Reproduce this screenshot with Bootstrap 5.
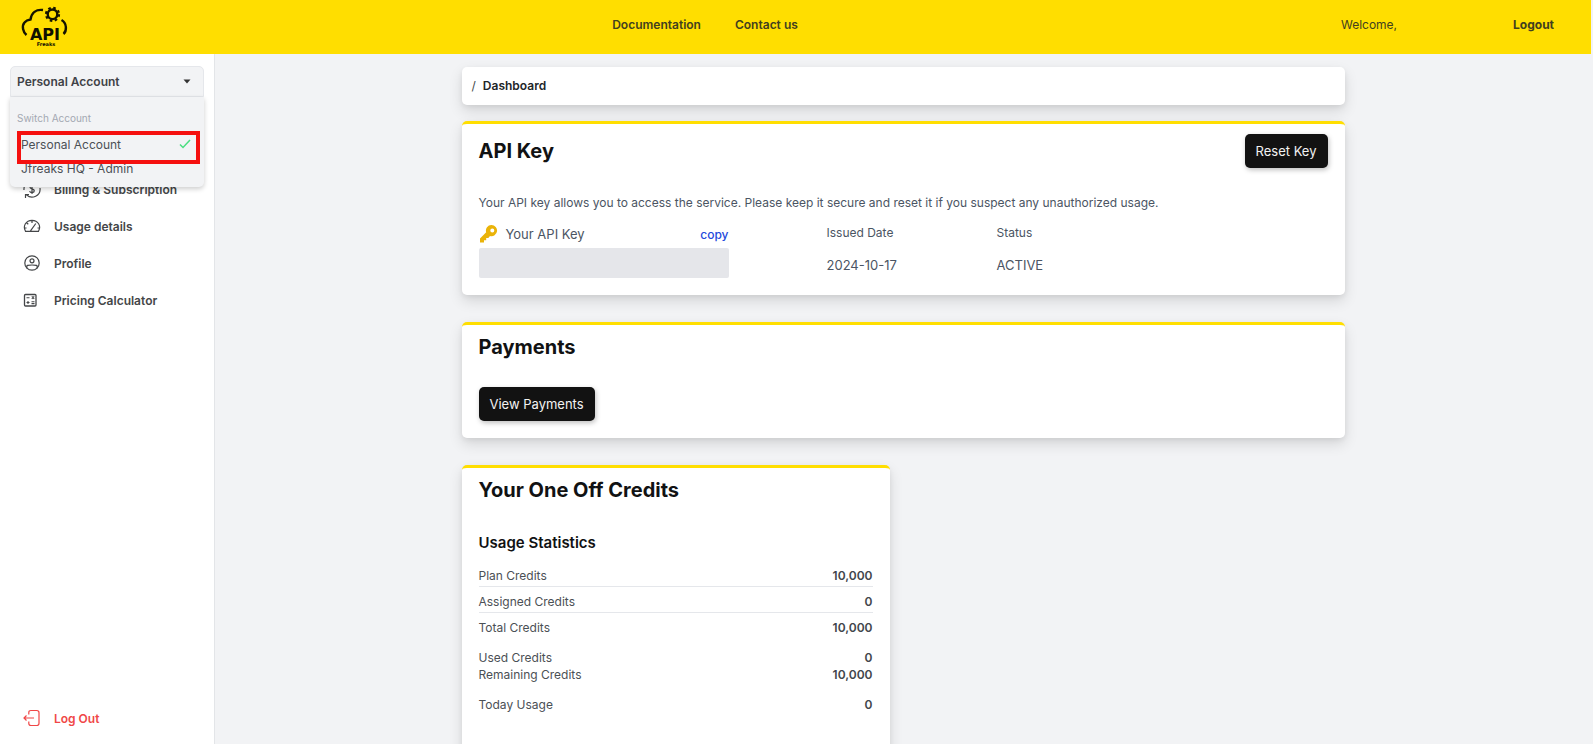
<!DOCTYPE html>
<html lang="en">
<head>
<meta charset="utf-8">
<meta name="viewport" content="width=device-width, initial-scale=1">
<title>API Freaks - Dashboard</title>
<link href="https://cdn.jsdelivr.net/npm/bootstrap@5.3.0/dist/css/bootstrap.min.css" rel="stylesheet">
<style>
  :root { --brand: #ffde00; --ink: #111213; --muted: #4b5563; --page: #f2f3f5; }
  body { font-family: Inter, sans-serif; font-size: 12px; line-height: 17px; color: #444648; background: var(--page); padding-right: 2px; }
  a { color: inherit; text-decoration: none; }
  .topbar { background: var(--brand); height: 54px; padding: 0 37px 5px 20px; color: #42401f; }
  .topbar .logo { width: 50px; height: 46px; margin-top: 5px; }
  .topbar .side { flex: 1 1 0; }
  .topbar .links { flex: 0 0 auto; gap: 34px; margin-right: 164px; }
  .topbar .user { gap: 116px; }
  .sidebar { width: 215px; flex: none; background: #fff; border-right: 1px solid #e3e5e8; padding: 12px 10px 9px; }
  .switcher button.toggle { width: 100%; height: 31px; padding: 0 12px 0 6px; background: var(--page); border: 1px solid #e5e7eb; border-radius: 5px 5px 0 0; font-weight: 600; color: #3f4247; }
  .switcher .dropdown-menu { top: 31px; left: 0; width: 100%; min-width: 0; margin: 0; padding: 13px 7px 7px; border: 0; border-radius: 0 0 5px 5px; background: var(--page); box-shadow: 0 2px 5px rgba(0,0,0,.2); font-size: 12px; color: #4b5055; }
  .switcher .caption { font-size: 10px; color: #a3a8b2; margin-bottom: 5px; }
  .switcher .option { border: 0; background: none; width: 100%; padding: 0 6px 0 4px; color: inherit; height: 24px; }
  .switcher .marker { position: absolute; left: 7px; right: 4px; top: 34px; height: 33px; border: 4px solid #f5100f; pointer-events: none; }
  .menu { margin-top: 75px; gap: 3px; }
  .menu a, .logout { height: 34px; padding-left: 13px; gap: 13px; font-weight: 600; color: #444648; }
  .menu svg, .logout svg { width: 18px; height: 18px; flex: none; }
  .logout { color: #f04747; }
  .content-wrap { max-width: 883px; padding-top: 13px; }
  .panel { background: #fff; border-radius: 5px; box-shadow: 0 6px 14px rgba(0,0,0,.12), 0 2px 5px rgba(0,0,0,.06); }
  .panel.accent { border-top: 3px solid var(--brand); padding: 8px 17px 17px; }
  .panel.key-info { padding-top: 10px; color: var(--muted); }
  .crumbs { height: 38px; padding: 0 10px 2px; gap: 7px; }
  h1, h2 { font-size: 20px; line-height: 28px; font-weight: 700; color: var(--ink); margin: 0; }
  h3 { font-size: 15px; line-height: 24px; font-weight: 600; color: var(--ink); margin: 0; }
  .btn-ink { --bs-btn-bg: #121212; --bs-btn-color: #f2f2f2; --bs-btn-hover-bg: #333; --bs-btn-hover-color: #fff; height: 34px; padding: 0 11px; border: 0; border-radius: 5px; font-size: 13px; line-height: 20px; box-shadow: 1px 2px 5px rgba(0,0,0,.25); }
  .key-head { margin-bottom: 23px; }
  .key-text { margin-bottom: 9px; padding-top: 3px; }
  .key-col { width: 250px; margin-right: 98px; }
  .key-date { width: 170px; }
  .key-field { height: 30px; width: 100%; border: 0; border-radius: 2px; background: #e5e6ea; }
  .big { font-size: 13px; line-height: 20px; }
  .key-value { margin-top: 14px; }
  .copy { color: #2449dc; font-weight: 500; border: 0; background: none; padding: 0; }
  .pay { margin: 27px 0; }
  .pay h2 { margin-bottom: 26px; }
  .credits { display: grid; grid-template-columns: 1fr 1fr; gap: 27px; }
  .credits h2 { margin-bottom: 27px; }
  .credits h3 { margin-bottom: 6px; }
  .stats { width: 100%; color: #4b5055; }
  .stats th { font-weight: 400; }
  .stats td { font-weight: 600; text-align: right; color: #42464b; }
  .stats th, .stats td { padding: 0; }
  .stats .ruled > * { padding: 6px 0 2px; border-bottom: 1px solid #e5e7eb; }
  .stats .spaced > * { padding-top: 6px; }
  .stats .section > * { padding-top: 13px; }
</style>
</head>
<body class="vh-100 overflow-hidden d-flex flex-column">
<header class="topbar d-flex align-items-center flex-shrink-0">
  <div class="side">
    <a href="#" aria-label="API Freaks">
      <svg class="logo" viewBox="20 4 50 46" fill="none" stroke="#161400" stroke-width="2.400">
        <path d="M26.500 35C23 32 21.500 26 24.500 22.500C26.500 20 29 19.700 30.500 19.500C31.500 13 36 9 43 10M61.500 20C67 23 67 31 63.500 34"/>
        <circle cx="52.500" cy="14.300" r="4.800" stroke-width="2.400"/>
        <circle cx="52.500" cy="14.300" r="6.500" stroke-width="2.200" stroke-dasharray="2.550 2.550"/>
        <g fill="#111000" stroke="none" font-family="DejaVu Sans, sans-serif" font-weight="700" text-anchor="middle">
          <text x="45" y="40" font-size="16">API</text>
          <text x="46" y="45.500" font-size="5">Freaks</text>
        </g>
      </svg>
    </a>
  </div>
  <nav class="links d-flex fw-semibold"><a href="#">Documentation</a><a href="#">Contact us</a></nav>
  <div class="side user d-flex justify-content-end"><span>Welcome,</span><a href="#" class="fw-bold">Logout</a></div>
</header>

<div class="d-flex flex-grow-1 overflow-hidden">
  <aside class="sidebar d-flex flex-column">
    <div class="switcher dropdown">
      <button class="toggle d-flex align-items-center justify-content-between" type="button" aria-expanded="true">Personal Account
        <svg width="8" height="5" viewBox="0 0 8 5"><path d="M.5 .5h7L4 4.500z" fill="#333"/></svg>
      </button>
      <div class="dropdown-menu show">
        <div class="caption">Switch Account</div>
        <button type="button" class="option d-flex align-items-center justify-content-between">Personal Account
          <svg width="12" height="10" viewBox="0 0 12 10" fill="none" stroke="#4ade80" stroke-width="1.500"><path d="M1 5.500 4 8.500 11 1"/></svg>
        </button>
        <button type="button" class="option d-flex align-items-center">Jfreaks HQ - Admin</button>
        <div class="marker"></div>
      </div>
    </div>
    <nav class="menu d-flex flex-column">
      <a href="#" class="d-flex align-items-center">
        <svg viewBox="0 0 18 18" fill="none" stroke="currentColor" stroke-width="1.200"><path d="M1 10A8 8 0 0 1 14 3M17 8A8 8 0 0 1 3.500 14.800M2.500 18V14.500H6M14.500 0V3.500H11M11.500 6.500C10.500 5 7 5.200 7 7.200S11.300 8.500 11.300 10.800S7.500 13 6.500 11.300M9 4V14"/></svg>
        Billing &amp; Subscription</a>
      <a href="#" class="d-flex align-items-center">
        <svg viewBox="0 0 18 18" fill="none" stroke="currentColor" stroke-width="1.200"><path d="M2.500 14.300C-.5 9 3 3.300 9 3.300S18.500 9 15.500 14.300ZM9 3.500V6M3.800 6 5.300 7.300M1.300 11H3.500M14.500 11H16.700M7.500 13.800 12.800 6.500"/></svg>
        Usage details</a>
      <a href="#" class="d-flex align-items-center">
        <svg viewBox="0 0 18 18" fill="none" stroke="currentColor" stroke-width="1.200"><circle cx="9" cy="9" r="7.200"/><circle cx="9" cy="6.800" r="2"/><path d="M4 14.300C2.800 11 5 11 9 11S15.200 11 14 14.300"/></svg>
        Profile</a>
      <a href="#" class="d-flex align-items-center">
        <svg viewBox="0 0 18 18" fill="none" stroke="currentColor" stroke-width="1.300"><rect x="1.500" y="3.500" width="11.500" height="11.500" rx="1"/><path d="M3.500 6.700H6.500M8.800 5.400 11.200 7.800M11.200 5.400 8.800 7.800M3.500 11.500H6.500M5 10V13M8.500 10.700H11.500M8.500 12.600H11.500" stroke-width="1.100"/></svg>
        Pricing Calculator</a>
    </nav>
    <a href="#" class="logout d-flex align-items-center mt-auto">
      <svg viewBox="0 0 18 18" fill="none" stroke="currentColor" stroke-width="1.200"><path d="M5.800 5.500V3.500Q5.800 1.500 8 1.500H13.800Q16 1.500 16 3.700V14.300Q16 16.500 13.800 16.500H8Q5.800 16.500 5.800 14.500V12.500M11 9H1M3.500 6.500 1 9 3.500 11.500"/></svg>
      Log Out</a>
  </aside>

  <main class="flex-grow-1 overflow-hidden px-3">
    <div class="content-wrap mx-auto">
      <nav class="panel crumbs d-flex align-items-center mb-3" aria-label="breadcrumb"><span>/</span><a href="#" class="fw-semibold text-dark">Dashboard</a></nav>

      <section class="panel accent key-info">
        <div class="key-head d-flex justify-content-between align-items-center"><h1>API Key</h1><button type="button" class="btn btn-ink">Reset Key</button></div>
        <p class="key-text">Your API key allows you to access the service. Please keep it secure and reset it if you suspect any unauthorized usage.</p>
        <div class="d-flex flex-wrap pt-1">
          <div class="key-col">
            <div class="d-flex align-items-center mb-1">
              <svg class="me-2" width="19" height="18" viewBox="0 0 19 18"><path d="M12.500 0a5.500 5.500 0 0 0-5.300 7.200L1 13.500V17.500H5V15.300H7.200V13H9.300L11 11A5.600 5.600 0 1 0 12.500 0ZM13.300 3.600a2 2 0 1 1 0 4 2 2 0 0 1 0-4Z" fill="#eab308" fill-rule="evenodd"/></svg>
              <label for="apikey" class="big me-auto">Your API Key</label>
              <button type="button" class="copy">copy</button>
            </div>
            <input id="apikey" class="key-field d-block" type="text" readonly>
          </div>
          <div class="key-date"><div>Issued Date</div><div class="big key-value">2024-10-17</div></div>
          <div><div>Status</div><div class="big key-value">ACTIVE</div></div>
        </div>
      </section>

      <section class="panel accent pay">
        <h2>Payments</h2>
        <button type="button" class="btn btn-ink">View Payments</button>
      </section>

      <div class="credits">
        <section class="panel accent pb-5">
          <h2>Your One Off Credits</h2>
          <h3>Usage Statistics</h3>
          <table class="stats">
            <tbody>
              <tr class="ruled"><th scope="row">Plan Credits</th><td>10,000</td></tr>
              <tr class="ruled"><th scope="row">Assigned Credits</th><td>0</td></tr>
              <tr class="spaced"><th scope="row">Total Credits</th><td>10,000</td></tr>
              <tr class="section"><th scope="row">Used Credits</th><td>0</td></tr>
              <tr><th scope="row">Remaining Credits</th><td>10,000</td></tr>
              <tr class="section"><th scope="row">Today Usage</th><td>0</td></tr>
            </tbody>
          </table>
        </section>
      </div>
    </div>
  </main>
</div>
<script src="https://cdn.jsdelivr.net/npm/bootstrap@5.3.0/dist/js/bootstrap.bundle.min.js"></script>
</body>
</html>
